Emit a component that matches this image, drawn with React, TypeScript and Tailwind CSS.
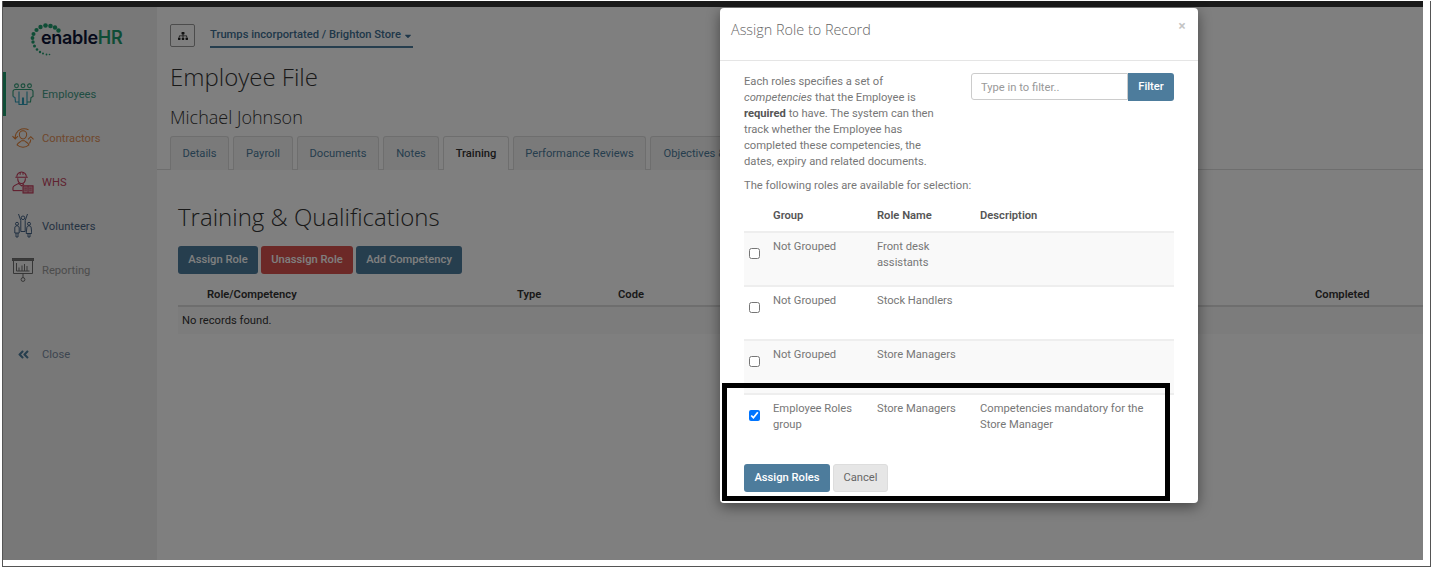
import { FaSitemap, FaAngleDoubleLeft, FaCaretDown } from 'react-icons/fa';

const roboto = "font-['Roboto','Liberation_Sans',sans-serif]";

const tabs = [
  { label: 'Details', width: 'w-[59px]' },
  { label: 'Payroll', width: 'w-[60px]' },
  { label: 'Documents', width: 'w-[82px]' },
  { label: 'Notes', width: 'w-[56px]' },
  { label: 'Training', width: 'w-[66px]', active: true },
  { label: 'Performance Reviews', width: 'w-[133px]' },
  { label: 'Objectives & Goals', width: 'w-[120px]' },
];

const roles = [
  { group: ['Not Grouped'], name: ['Front desk', 'assistants'], desc: [], striped: true },
  { group: ['Not Grouped'], name: ['Stock Handlers'], desc: [], striped: false },
  { group: ['Not Grouped'], name: ['Store Managers'], desc: [], striped: true },
  {
    group: ['Employee Roles', 'group'],
    name: ['Store Managers'],
    desc: ['Competencies mandatory for the', 'Store Manager'],
    striped: false,
    checked: true,
  },
];

function Logo() {
  const dots = [
    [33, 42, 1.7], [32.5, 38, 1.9], [33.5, 34, 2], [36.5, 30, 2.1], [40.5, 27, 2.2],
    [45.5, 25.5, 2.3], [50.5, 26, 2.3], [55, 27.5, 2.2], [58.5, 30.5, 2.2], [34.5, 46, 1.5],
    [37, 49.5, 1.3], [40, 52, 1.2], [43, 53.5, 1], [46.5, 54.5, 0.9], [49.5, 54.5, 0.8],
  ];
  return (
    <div className="relative h-[40px] w-full">
      <svg width="70" height="40" viewBox="28 20 70 40" className="absolute left-[25px] top-0">
        {dots.map(([x, y, r], i) => (
          <circle key={i} cx={x} cy={y} r={r} fill="#1f9a6d" />
        ))}
      </svg>
      <span className="absolute left-[38px] top-[6px] font-['Inter',sans-serif] text-[18px] font-semibold leading-[24px] tracking-[-0.3px] text-[#0c1436]">
        enable<span className="text-[#1f9a6d]">HR</span>
      </span>
    </div>
  );
}

function EmployeesIcon() {
  return (
    <svg width="22" height="22" viewBox="0 0 22 22" fill="none" stroke="#2d9ab5" strokeWidth="1.1">
      <circle cx="4.500" cy="2.800" r="1.900" stroke="#2f9a76" />
      <circle cx="11" cy="2.800" r="1.900" stroke="#2f9a76" />
      <circle cx="17.500" cy="2.800" r="1.900" stroke="#2f9a76" />
      <path d="M1 13.500V8.500c0-1.200 1-2 2.500-2h15c1.500 0 2.500.8 2.500 2v5l-2 1-.5 4.500H15" stroke="#2f9a76" />
      <path d="M1 13.500l2 1 .5 4.500H7" stroke="#2d9ab5" />
      <path d="M7 8.500V21.500h3.500V15h1v6.500H15V8.500" />
    </svg>
  );
}

function ContractorsIcon() {
  return (
    <svg width="24" height="22" viewBox="0 0 24 22" fill="none" stroke="#e07f35" strokeWidth="1.1">
      <path d="M8 7a4 4 0 0 1 8 0c0 2.500-1.500 5-4 5s-4-2.500-4-5z" />
      <path d="M5.500 18.500c1-2.500 3.500-3 5-4.500h3c1.500 1.500 4 2 5 4.500A9.500 9.500 0 0 1 5.500 18.500z" />
      <path d="M4.500 6A10 10 0 0 1 18 2" />
      <path d="M0.500 9l3 3 3-3M3.500 12c-.3-2 0-4 1-6" />
      <path d="M20.500 12.500A10 10 0 0 1 19 17" />
      <path d="M17.500 12.500l3-3 3 3" />
    </svg>
  );
}

function WhsIcon() {
  return (
    <svg width="23" height="24" viewBox="0 0 23 24" fill="none" stroke="#c03555" strokeWidth="1.1">
      <path d="M5 6.500a5 5 0 0 1 10 0" />
      <path d="M8.500 1.500v3M11.500 1.500v3M3.500 7h13" />
      <path d="M6 8c0 3 1.500 5.500 4 5.500s4-2.500 4-5.500" />
      <path d="M1 21v-3c0-2 3.500-3.200 6-4.500l3 2.500 2.500-2" />
      <path d="M1 21h10" />
      <rect x="11.500" y="16" width="10.500" height="7.500" fill="#c03555" fillOpacity="0.45" />
      <path d="M16.800 16v7.500M13 18.500h2.500M18 18.500h2.500M13 20.500h2.500M18 20.500h2.500" strokeWidth="0.7" />
    </svg>
  );
}

function VolunteersIcon() {
  return (
    <svg width="18" height="24" viewBox="0 0 18 24" fill="none" stroke="#34557a" strokeWidth="0.9">
      <circle cx="9" cy="3.800" r="1.800" />
      <path d="M4.500 0l2.300 6.500v11h4.400v-11L13.500 0" />
      <circle cx="3" cy="9.800" r="1.500" />
      <path d="M.8 19v-5c0-1.500.8-2.200 2.200-2.200s2.200.7 2.200 2.200v5zM2 19v4h2v-4" />
      <circle cx="15" cy="9.800" r="1.500" />
      <path d="M15 11.800c-1.400 0-2.200.8-2.200 2.200l-.6 5.500h5.600l-.6-5.500c0-1.400-.8-2.200-2.200-2.200zM14 19.500v3.500h2v-3.500" />
    </svg>
  );
}

function ReportingIcon() {
  return (
    <svg width="22" height="24" viewBox="0 0 22 24" fill="none" stroke="#6e6e6e" strokeWidth="1">
      <path d="M0 .5h22v2H0z" fill="#777" />
      <path d="M1.500 2.500v13h19v-13" />
      <path d="M4.500 5v8h13M7 13V9.500M10 13V7.500M12.500 13V6M15 13V8" />
      <path d="M11 15.500v4.500" />
      <circle cx="11" cy="21.500" r="1.900" />
    </svg>
  );
}

function NavItem({ icon, label, color, active }: { icon: React.ReactNode; label: string; color: string; active?: boolean }) {
  return (
    <div className={`flex h-[44px] items-center ${active ? 'border-l-[3px] border-[#1f9a6d] pl-[6px]' : 'pl-[9px]'}`}>
      <div className="mr-[8px] flex w-[22px] justify-center">{icon}</div>
      <span className={`pt-[2px] text-[11.2px] ${color}`}>{label}</span>
    </div>
  );
}

function Sidebar() {
  return (
    <aside className="flex w-[154px] shrink-0 flex-col bg-[#f0f0f0] pt-[13px]">
      <Logo />
      <nav className="mt-[12px] flex flex-col">
        <NavItem icon={<EmployeesIcon />} label="Employees" color="text-[#3f9a86]" active />
        <NavItem icon={<ContractorsIcon />} label="Contractors" color="text-[#e0905a]" />
        <NavItem icon={<WhsIcon />} label="WHS" color="text-[#c04560]" />
        <NavItem icon={<VolunteersIcon />} label="Volunteers" color="text-[#4a6585]" />
        <NavItem icon={<ReportingIcon />} label="Reporting" color="text-[#999999]" />
      </nav>
      <div className="mt-[40px] flex h-[44px] items-center pl-[9px]">
        <div className="mr-[8px] flex w-[22px] justify-center">
          <FaAngleDoubleLeft className="text-[13px] text-[#4d7c9c]" />
        </div>
        <span className="pt-[2px] text-[11.2px] text-[#7b8ba0]">Close</span>
      </div>
    </aside>
  );
}

function MainContent() {
  return (
    <main className="min-w-0 flex-1 overflow-hidden bg-white pt-[16px] text-[11.2px]">
      <div className="flex items-center pl-[13px]">
        <div className="flex h-[23px] w-[25px] items-center justify-center rounded-[2px] border border-[#999] text-[10px] text-[#222]">
          <FaSitemap />
        </div>
        <div className="ml-[15px] flex h-[25px] w-[203px] items-center border-b-2 border-[#4d7c9c] pt-[2px] font-medium whitespace-nowrap text-[#3f6f93]">
          Trumps incorportated / Brighton Store
          <FaCaretDown className="ml-[2px] text-[10px]" />
        </div>
      </div>

      <h1 className="ml-[13px] mt-[11px] font-['Open_Sans',sans-serif] text-[24px] font-light leading-[36px] text-[#333]">Employee File</h1>
      <h2 className="ml-[13px] mt-[9px] font-['Open_Sans',sans-serif] text-[18px] font-light leading-[26px] text-[#333]">Michael Johnson</h2>

      <div className="mt-[6px] flex h-[34px] gap-[4px] border-b border-[#ddd] pl-[13px]">
        {tabs.map((tab) => (
          <div
            key={tab.label}
            className={`flex h-[34px] shrink-0 items-center justify-center whitespace-nowrap rounded-t-[3px] border border-b-0 border-[#ddd] pt-[2px] ${tab.width} ${
              tab.active ? 'bg-white font-medium text-[#333]' : 'bg-[#f5f5f5] text-[#4d7c9c]'
            }`}
          >
            {tab.label}
          </div>
        ))}
      </div>

      <div className="pl-[21px]">
        <h3 className="mt-[29px] font-['Open_Sans',sans-serif] text-[24px] font-light leading-[36px] text-[#333]">Training &amp; Qualifications</h3>
        <div className="mt-[11px] flex gap-[3px] font-medium text-white">
          <button className="h-[28px] w-[80px] rounded-[3px] bg-[#4d7c9c]">Assign Role</button>
          <button className="h-[28px] w-[92px] rounded-[3px] bg-[#d9534f]">Unassign Role</button>
          <button className="h-[28px] w-[106px] rounded-[3px] bg-[#4d7c9c]">Add Competency</button>
        </div>
        <div className="mt-[13px] flex h-[20px] items-center border-b-2 border-[#ddd] pb-[1px] font-semibold text-[#333]">
          <span className="ml-[29px] w-[310px]">Role/Competency</span>
          <span className="w-[101px]">Type</span>
          <span className="w-[697px]">Code</span>
          <span>Completed</span>
        </div>
        <div className="flex h-[27px] items-center bg-[#f9f9f9] pl-[4px] pt-[1px] text-[#333]">No records found.</div>
      </div>
    </main>
  );
}

function RoleRow({ role }: { role: (typeof roles)[number] }) {
  return (
    <div className={`flex h-[54px] border-t-2 border-[#eee] pt-[6px] leading-[16px] ${role.striped ? 'bg-[#f9f9f9]' : 'bg-white'}`}>
      <div className="w-[29px] pl-[5px] pt-[9px]">
        <input
          type="checkbox"
          readOnly
          checked={!!role.checked}
          className="block h-[11px] w-[11px] accent-[#0075ff]"
        />
      </div>
      <div className="w-[104px]">
        {role.group.map((line) => (
          <div key={line}>{line}</div>
        ))}
      </div>
      <div className="w-[103px]">
        {role.name.map((line) => (
          <div key={line}>{line}</div>
        ))}
      </div>
      <div className="flex-1">
        {role.desc.map((line) => (
          <div key={line}>{line}</div>
        ))}
      </div>
    </div>
  );
}

function AssignRoleModal() {
  return (
    <div className="absolute left-[717px] top-[1px] h-[495px] w-[478px] rounded-[4px] bg-white text-[11.2px] text-[#777] shadow-[0_4px_14px_rgba(0,0,0,0.45)]">
      <div className="relative h-[53px] border-b border-[#e5e5e5] pl-[11px] pt-[11px] font-['Open_Sans',sans-serif] text-[14.4px] font-light leading-[22px] text-[#666]">
        Assign Role to Record
        <span className="absolute right-[12px] top-[8px] text-[14px] font-bold leading-[20px] text-[#c4c4c4]">×</span>
      </div>
      <div className="px-[24px]">
        <div className="flex justify-between pt-[12px]">
          <p className="mt-[1px] w-[200px] leading-[16px]">
            Each roles specifies a set of <em>competencies</em> that the Employee is <strong className="text-[#555]">required</strong> to have. The system can then track whether the Employee has completed these competencies, the dates, expiry and related documents.
          </p>
          <div className="flex h-[28px] w-[203px]">
            <input
              readOnly
              placeholder="Type in to filter.."
              className="h-[27px] w-[157px] rounded-l-[3px] border border-[#ccc] bg-white pl-[9px] pt-[2px] outline-none placeholder:text-[#999]"
            />
            <button className="h-[28px] w-[46px] rounded-r-[3px] bg-[#4d7c9c] font-medium text-white">Filter</button>
          </div>
        </div>
        <p className="mt-[8px] leading-[16px]">The following roles are available for selection:</p>
        <div className="mt-[14px] flex h-[23px] font-semibold leading-[16px] text-[#555]">
          <span className="ml-[29px] w-[104px]">Group</span>
          <span className="w-[103px]">Role Name</span>
          <span>Description</span>
        </div>
        {roles.map((role, i) => (
          <RoleRow key={i} role={role} />
        ))}
        <div className="mt-[17px] flex gap-[3px]">
          <button className="h-[28px] w-[86px] rounded-[3px] bg-[#4d7c9c] font-medium text-white">Assign Roles</button>
          <button className="h-[28px] w-[55px] rounded-[3px] border border-[#ddd] bg-[#e6e6e6] text-[#666]">Cancel</button>
        </div>
      </div>
    </div>
  );
}

export default function App() {
  return (
    <div className={`h-[568px] w-[1432px] overflow-hidden bg-white pl-[2px] pt-[1px] ${roboto}`}>
      <div className="h-[566px] w-[1429px] border-b border-l border-r border-[#555] pr-[7px]">
        <div className="h-[6px] bg-[#1a1a1a]" />
        <div className="relative flex h-[553px]">
          <Sidebar />
          <MainContent />
          <div className="absolute inset-0 bg-black/50" />
          <AssignRoleModal />
          <div className="absolute left-[719px] top-[376px] h-[118px] w-[448px] border-[5px] border-black" />
        </div>
      </div>
    </div>
  );
}
